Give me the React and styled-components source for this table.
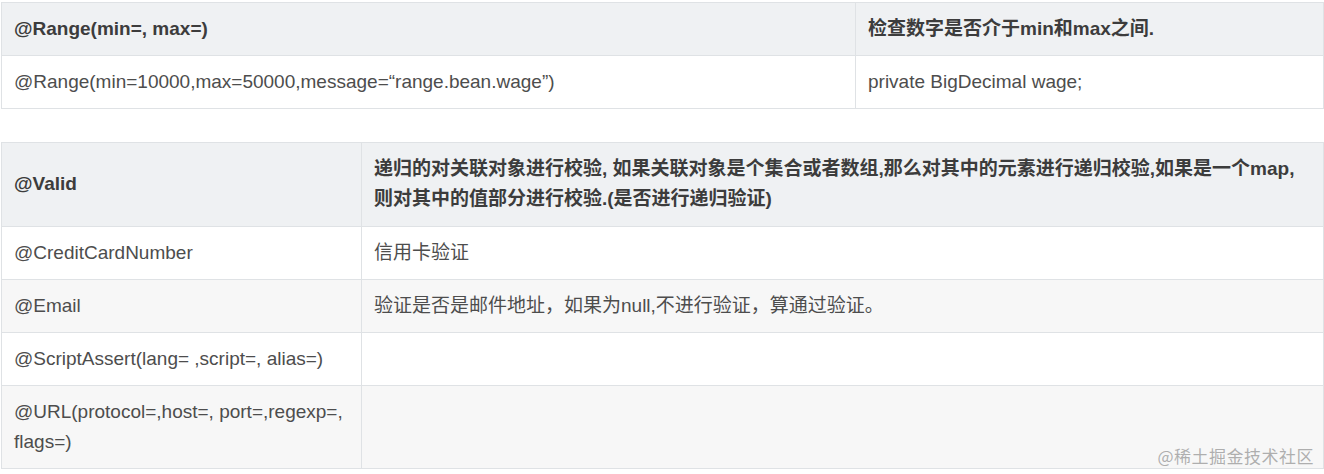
import React from "react";
import styled, { createGlobalStyle } from "styled-components";

const Global = createGlobalStyle`
  html, body { margin: 0; padding: 0; background: #fff; }
  body {
    font-family: "Liberation Sans", Arial, "Noto Sans CJK SC", sans-serif;
    color: #4d4d4d;
  }
`;

const Page = styled.div`
  position: relative;
  width: 1324px;
  height: 474px;
  padding: 2px 0 0 1px;
  box-sizing: border-box;
  display: flex;
  flex-direction: column;
  gap: 33px;
  overflow: hidden;
`;

const Table = styled.table`
  width: 1322px;
  border-collapse: collapse;
  table-layout: fixed;
  font-size: 19px;
  line-height: 30px;
`;

const Row = styled.tr`
  background: ${(p) => (p.$head ? "#eff1f3" : p.$alt ? "#f7f7f7" : "#ffffff")};
`;

const Cell = styled.td`
  border: 1px solid #dfe2e5;
  padding: 11.1px 12px;
  vertical-align: middle;
  text-align: left;
  white-space: nowrap;
  font-weight: ${(p) => (p.$bold ? 700 : 400)};
  color: ${(p) => (p.$bold ? "#3c3c3c" : "#4d4d4d")};
  box-sizing: border-box;
`;

const Watermark = styled.div`
  position: absolute;
  right: 10px;
  bottom: 6px;
  font-size: 17px;
  letter-spacing: 0.5px;
  color: rgba(150, 150, 150, 0.75);
  font-family: "Noto Sans CJK SC", sans-serif;
  pointer-events: none;
`;

export default function App() {
  return (
    <>
      <Global />
      <Page>
        <Table>
          <colgroup>
            <col style={{ width: 854 }} />
            <col style={{ width: 468 }} />
          </colgroup>
          <tbody>
            <Row $head>
              <Cell $bold>@Range(min=, max=)</Cell>
              <Cell $bold>检查数字是否介于min和max之间.</Cell>
            </Row>
            <Row>
              <Cell>@Range(min=10000,max=50000,message=“range.bean.wage”)</Cell>
              <Cell>private BigDecimal wage;</Cell>
            </Row>
          </tbody>
        </Table>
        <Table>
          <colgroup>
            <col style={{ width: 360 }} />
            <col style={{ width: 962 }} />
          </colgroup>
          <tbody>
            <Row $head>
              <Cell $bold>@Valid</Cell>
              <Cell $bold>
                递归的对关联对象进行校验, 如果关联对象是个集合或者数组,那么对其中的元素进行递归校验,如果是一个map,
                <br />
                则对其中的值部分进行校验.(是否进行递归验证)
              </Cell>
            </Row>
            <Row>
              <Cell>@CreditCardNumber</Cell>
              <Cell>信用卡验证</Cell>
            </Row>
            <Row $alt>
              <Cell>@Email</Cell>
              <Cell>验证是否是邮件地址，如果为null,不进行验证，算通过验证。</Cell>
            </Row>
            <Row>
              <Cell>@ScriptAssert(lang= ,script=, alias=)</Cell>
              <Cell></Cell>
            </Row>
            <Row $alt>
              <Cell>
                @URL(protocol=,host=, port=,regexp=,
                <br />
                flags=)
              </Cell>
              <Cell></Cell>
            </Row>
          </tbody>
        </Table>
        <Watermark>@稀土掘金技术社区</Watermark>
      </Page>
    </>
  );
}
